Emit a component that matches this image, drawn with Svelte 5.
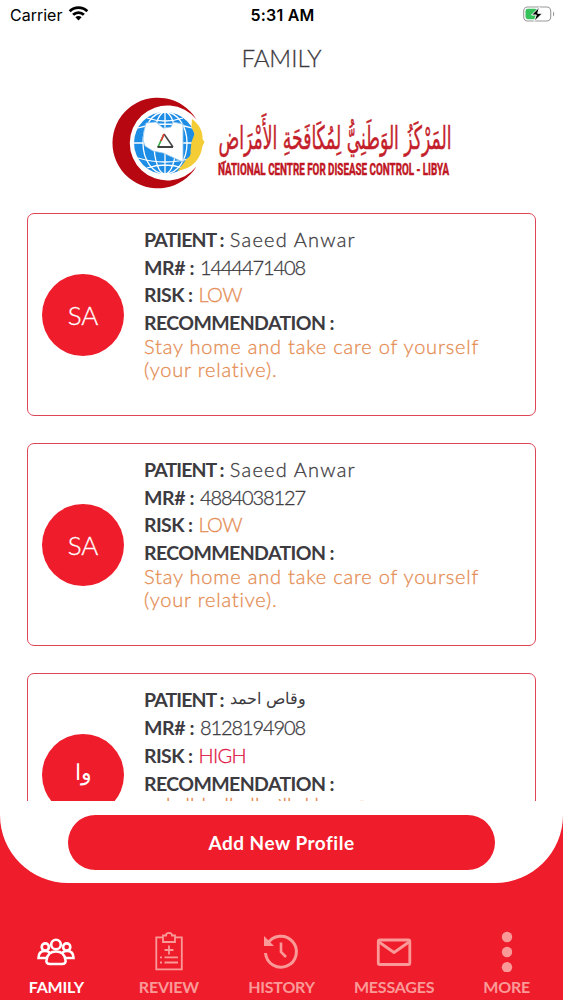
<script lang="ts">
  type Profile = {
    initials: string;
    name: string;
    mr: string;
    risk: 'LOW' | 'HIGH';
    advice: string;
    arabic?: boolean;
  };

  const profiles: Profile[] = [
    {
      initials: 'SA',
      name: 'Saeed Anwar',
      mr: '1444471408',
      risk: 'LOW',
      advice: 'Stay home and take care of yourself (your relative).'
    },
    {
      initials: 'SA',
      name: 'Saeed Anwar',
      mr: '4884038127',
      risk: 'LOW',
      advice: 'Stay home and take care of yourself (your relative).'
    },
    {
      initials: 'وا',
      name: 'وقاص احمد',
      mr: '8128194908',
      risk: 'HIGH',
      advice: 'نقترح عليك الاتصال بالخط الساخن',
      arabic: true
    }
  ];

  const tabs = ['FAMILY', 'REVIEW', 'HISTORY', 'MESSAGES', 'MORE'];

  let active = $state('FAMILY');
</script>

<div class="screen">
  <main class="sheet">
    <div class="status">
      <div class="carrier">
        <span>Carrier</span>
        <svg width="21" height="16" viewBox="0 0 20 16" fill="none" stroke="#000" stroke-width="2.8">
          <path d="M1.2 6.2a12.6 12.6 0 0 1 17.6 0" />
          <path d="M4.6 9.8a7.7 7.7 0 0 1 10.8 0" />
          <path d="M10 15.4 6.9 12.2a4.4 4.4 0 0 1 6.2 0z" fill="#000" stroke="none" />
        </svg>
      </div>
      <span class="time">5:31 AM</span>
      <svg class="battery" width="32" height="17" viewBox="0 0 32 17">
        <rect x="0.7" y="1" width="27" height="14" rx="4" fill="#fff" stroke="#999" stroke-width="1.1" />
        <rect x="2.5" y="2.8" width="12" height="10.4" rx="2.4" fill="#35c25a" />
        <path d="M30 5.5v5c1.6-.8 1.6-4.2 0-5z" fill="#999" />
        <path d="M16.5 1 8.500 9h4.800l-2.300 6.500 8.500-8.200h-4.800z" fill="#000" stroke="#fff" stroke-width="1" />
      </svg>
    </div>

    <h1>FAMILY</h1>

    <svg class="logo" width="344" height="94" viewBox="110 96 344 94">
      <path d="M196.500 119.500a45.300 45.300 0 1 0 0 47 37.500 37.500 0 1 1 0-47z" fill="#b70710" />
      <circle cx="165" cy="143" r="33" fill="#fff" />
      <circle cx="165" cy="143" r="31" fill="#1d8de6" />
      <g fill="none" stroke="#fff" stroke-width="1.3">
        <ellipse cx="165" cy="143" rx="11" ry="31" />
        <ellipse cx="165" cy="143" rx="22" ry="31" />
        <path d="M165 112v62M134 143h62M138 128q27-8 54 0M138 158q27 8 54 0M147 118q18 6 36 0M147 168q18-6 36 0" />
      </g>
      <path d="M192 119c8 6 11 13 10.500 20l2 3-2 4c-2 13-9 22-25 25l7-9c2-5 7-4 6-11l1-9 3-8-3-7z" fill="#f4cc35" />
      <path d="M146 123l10-1 7 6 8-1 2-5 10 2 0 38-20-9-10-2-8-5-2-6 1-9z" fill="#fff" stroke="#8cc3ed" stroke-width=".8" />
      <path d="M164 134l-6 13" stroke="#35ad48" stroke-width="1.7" />
      <path d="M157.500 147H173" stroke="#222" stroke-width="1.7" />
      <path d="M164 134l9 13" stroke="#444" stroke-width="1.5" />
      <path d="M164 134l-3 7" stroke="#e23a32" stroke-width="1.7" />
      <text class="logo-ar" x="335" y="149" text-anchor="middle" direction="rtl" textLength="233" lengthAdjust="spacingAndGlyphs">المَرْكَزُ الوَطَنِيُّ لِمُكَافَحَةِ الأَمْرَاضِ</text>
      <text class="logo-en" x="218" y="175" textLength="231" lengthAdjust="spacingAndGlyphs">NATIONAL CENTRE FOR DISEASE CONTROL - LIBYA</text>
    </svg>

    <div class="list">
      {#each profiles as p}
        <article class="card" class:roomy={p.arabic}>
          <div class="avatar" class:arabic={p.arabic}>{p.initials}</div>
          <div class="info">
            <div class="row"><b class="k-patient">PATIENT :</b><span class="name" class:arabic={p.arabic}>{p.name}</span></div>
            <div class="row"><b>MR# :</b><span class="mr">{p.mr}</span></div>
            <div class="row"><b class="k-risk">RISK :</b><span class="risk" class:high={p.risk === 'HIGH'}>{p.risk}</span></div>
            <div class="row"><b class="k-rec">RECOMMENDATION :</b></div>
            <p class="advice" class:arabic={p.arabic}>{p.advice}</p>
          </div>
        </article>
      {/each}
    </div>

    <button class="add">Add New Profile</button>
  </main>

  <nav>
    {#each tabs as tab}
      <button class="tab" class:active={active === tab} onclick={() => (active = tab)}>
        <svg width="44" height="44" viewBox="0 0 44 44" fill="none" stroke="currentColor" stroke-width="2.6">
          {#if tab === 'FAMILY'}
            <circle cx="22" cy="16.500" r="4.800" />
            <circle cx="11.300" cy="19" r="3.600" />
            <circle cx="32.700" cy="19" r="3.600" />
            <path d="M16 36h12c3 0 4-1.500 3.500-4-.8-5.500-4-8.500-9.500-8.500s-8.700 3-9.500 8.500c-.5 2.500.5 4 3.500 4zM12.500 30H4.500c0-4.500 2.500-7 6.500-7 2 0 3.500.5 4.500 1.500M31.500 30h8c0-4.500-2.500-7-6.500-7-2 0-3.500.5-4.500 1.500" />
          {:else if tab === 'REVIEW'}
            <g stroke-width="1.8">
              <path d="M16 9.300H9.300v32h25.500v-32H28" />
              <path d="M16 7.500h3c0-3.500 6-3.500 6 0h3V14H16z" />
              <path d="M22 17.500v9M17.500 22h9M13 29.300h2M17.500 29.300h13.500M13 34.500h2M17.500 34.500h13.500" />
            </g>
          {:else if tab === 'HISTORY'}
            <g stroke-width="3">
              <path d="M8.500 16A15.500 15.500 0 1 1 6.500 25" />
              <path d="M22 14.500V24l5 5" stroke-width="2.6" />
              <path d="M5 8v10h10z" fill="currentColor" stroke="none" />
            </g>
          {:else if tab === 'MESSAGES'}
            <g stroke-width="2.8" stroke-linejoin="round">
              <rect x="6.300" y="12" width="31.500" height="24.500" rx="1.500" />
              <path d="M7 14l15 10.500L37 14" />
            </g>
          {:else}
            <g fill="currentColor" stroke="none">
              <circle cx="22" cy="9" r="5.200" />
              <circle cx="22" cy="24" r="5.200" />
              <circle cx="22" cy="39.300" r="5.200" />
            </g>
          {/if}
        </svg>
        <span>{tab}</span>
      </button>
    {/each}
  </nav>
</div>

<style>
  :global(body) {
    background: #ef1c2b;
  }

  .screen {
    display: flex;
    flex-direction: column;
    width: 563px;
    height: 1000px;
    overflow: hidden;
    background: #ef1c2b;
    color: #3d3b3f;
    font-family: Lato, 'DejaVu Sans', sans-serif;
  }

  .sheet {
    display: flex;
    flex-direction: column;
    align-items: center;
    height: 883px;
    flex: none;
    background: #fff;
    border-radius: 0 0 68px 68px;
  }

  .status {
    display: grid;
    grid-template-columns: 1fr auto 1fr;
    align-items: center;
    width: 100%;
    height: 29px;
    box-sizing: border-box;
    padding: 0 8px 0 10px;
    color: #000;
    font-family: Inter, sans-serif;
    font-size: 16px;
  }

  .carrier {
    display: flex;
    align-items: center;
    gap: 6px;
  }

  .carrier svg {
    margin-top: -3px;
  }

  .time {
    font-weight: 600;
    letter-spacing: 0.2px;
  }

  .battery {
    justify-self: end;
  }

  h1 {
    margin: 14px 0 0;
    height: 30px;
    line-height: 30px;
    font-size: 24px;
    font-weight: 300;
    -webkit-text-stroke: 0.3px;
  }

  .logo {
    flex: none;
    margin-top: 23px;
    overflow: visible;
  }

  .logo-ar {
    font-family: 'DejaVu Sans', serif;
    font-size: 32px;
    fill: #c41e2b;
    stroke: #c41e2b;
    stroke-width: 0.5px;
  }

  .logo-en {
    font-family: Roboto, sans-serif;
    font-size: 17px;
    font-weight: 700;
    fill: #c01522;
    stroke: #c01522;
    stroke-width: 0.5px;
  }

  .list {
    display: flex;
    flex-direction: column;
    gap: 27px;
    width: 509px;
    height: 588px;
    margin-top: 23px;
    overflow: hidden;
  }

  .card {
    display: flex;
    align-items: center;
    flex: none;
    height: 203px;
    box-sizing: border-box;
    padding-left: 14px;
    border: 1px solid #dc4657;
    border-radius: 7px;
  }

  .avatar {
    width: 82px;
    height: 82px;
    flex: none;
    border-radius: 50%;
    background: #ef1c2b;
    color: #fff;
    font-size: 26px;
    font-weight: 300;
    line-height: 83px;
    text-align: center;
    -webkit-text-stroke: 0.3px;
  }

  .info {
    align-self: flex-start;
    width: 370px;
    margin: 12px 0 0 20px;
    font-size: 20px;
    font-weight: 300;
    -webkit-text-stroke: 0.3px;
  }

  .row {
    display: flex;
    gap: 6px;
    height: 27.6px;
    line-height: 27px;
    white-space: nowrap;
  }

  .roomy .row {
    height: 28px;
  }

  b {
    font-size: 19.5px;
    font-weight: 700;
    letter-spacing: -0.4px;
    -webkit-text-stroke: 0;
  }

  .k-patient {
    letter-spacing: -0.9px;
  }

  .k-risk,
  .k-rec {
    letter-spacing: -0.6px;
  }

  .name {
    letter-spacing: 1.2px;
  }

  .mr {
    letter-spacing: -1.1px;
  }

  .name.arabic,
  .advice.arabic,
  .avatar.arabic {
    font-family: 'DejaVu Sans', sans-serif;
    font-size: 15.5px;
    letter-spacing: 0;
    -webkit-text-stroke: 0;
  }

  .avatar.arabic {
    font-size: 22px;
    line-height: 78px;
  }

  .risk,
  .advice {
    color: #e58d54;
  }

  .risk {
    letter-spacing: -0.7px;
  }

  .risk.high {
    color: #df1746;
  }

  .advice {
    margin: -1px 0 0;
    line-height: 23px;
    letter-spacing: 0.8px;
  }

  .advice.arabic {
    margin-top: -4px;
  }

  .add {
    width: 427px;
    height: 55px;
    flex: none;
    margin-top: 14px;
    border: none;
    border-radius: 28px;
    background: #ef1c2b;
    color: #fff;
    font: 700 19px Lato, sans-serif;
    letter-spacing: 0.5px;
  }

  nav {
    display: grid;
    grid-template-columns: repeat(5, 1fr);
    padding-top: 45px;
  }

  .tab {
    display: flex;
    flex-direction: column;
    align-items: center;
    padding: 0;
    border: none;
    background: none;
    color: #fa9a98;
    font: 700 16px/24px Lato, sans-serif;
    letter-spacing: -0.2px;
  }

  .tab span {
    margin-top: 3px;
  }

  .tab.active {
    color: #fff;
  }
</style>
